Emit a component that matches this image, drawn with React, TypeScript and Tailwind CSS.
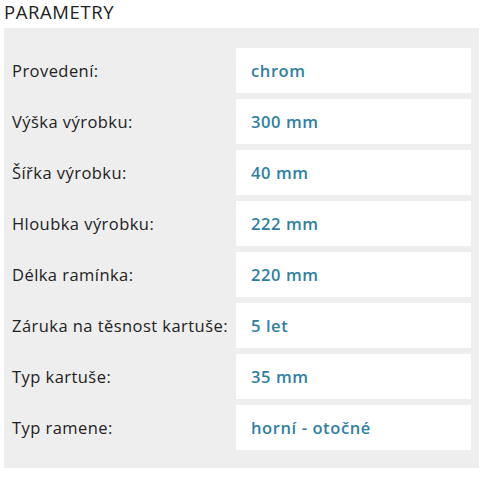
const params = [
  { label: 'Provedení:', value: 'chrom' },
  { label: 'Výška výrobku:', value: '300 mm' },
  { label: 'Šířka výrobku:', value: '40 mm' },
  { label: 'Hloubka výrobku:', value: '222 mm' },
  { label: 'Délka ramínka:', value: '220 mm' },
  { label: 'Záruka na těsnost kartuše:', value: '5 let' },
  { label: 'Typ kartuše:', value: '35 mm' },
  { label: 'Typ ramene:', value: 'horní - otočné' },
];

export default function App() {
  return (
    <div className="w-[487px] h-[479px] bg-white px-1 font-['Open_Sans',sans-serif]">
      <h2 className="text-[18.5px] leading-[24px] tracking-[0.6px] text-[#222] uppercase">Parametry</h2>
      <div className="mt-[4px] w-[475px] bg-[#eeeeee] pt-[20px] pb-[18px] pl-2 pr-2">
        <div className="flex flex-col gap-[6px]">
          {params.map((p) => (
            <div key={p.label} className="flex items-center">
              <div className="w-[224px] whitespace-nowrap pt-[1px] text-[16.5px] text-[#222] tracking-[0.45px]">{p.label}</div>
              <div className="flex h-[45px] w-[235px] items-center bg-white pl-[15px] pt-[2px] text-[16.5px] font-semibold tracking-[0.6px] text-[#2f7f9f]">
                {p.value}
              </div>
            </div>
          ))}
        </div>
      </div>
    </div>
  );
}
